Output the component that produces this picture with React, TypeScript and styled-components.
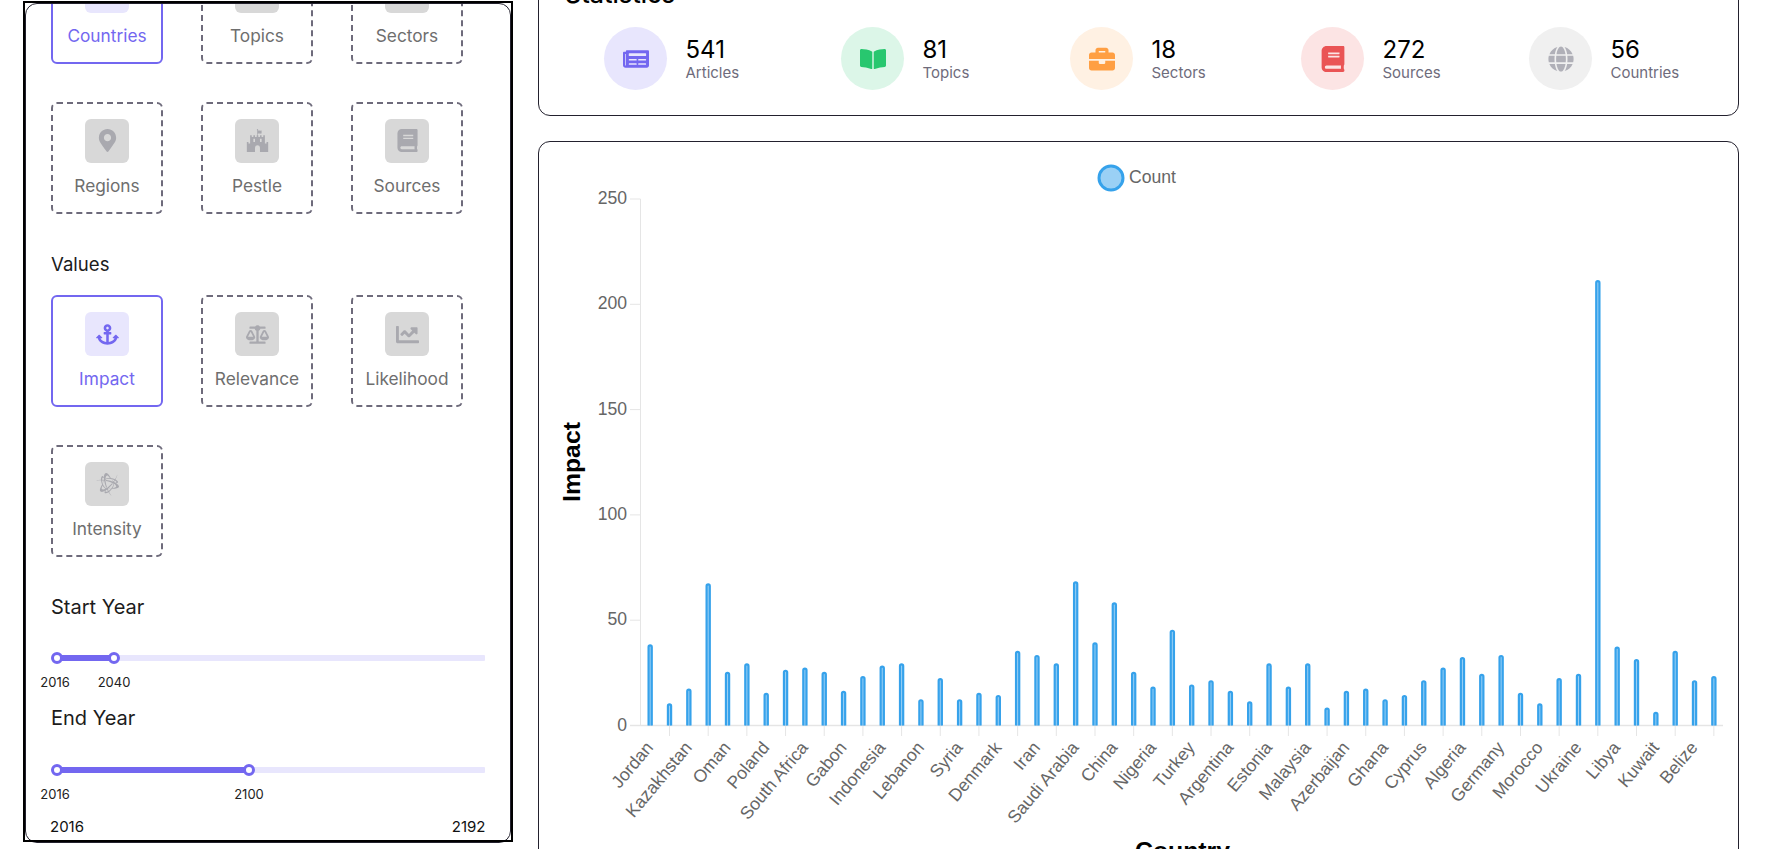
import { ReactNode } from "react";
import styled, { createGlobalStyle } from "styled-components";
import {
  FaAnchor,
  FaBalanceScale,
  FaBattleNet,
  FaBook,
  FaBookOpen,
  FaBriefcase,
  FaChartLine,
  FaFortAwesome,
  FaGlobe,
  FaMapMarkerAlt,
  FaNewspaper,
} from "react-icons/fa";

const PRIMARY = "#7367f0";
const AXIS = "#e5e5e5";
const TICK_TEXT = "#666";
const BAR = "#36a2eb";

const GlobalStyle = createGlobalStyle`
  html, body {
    margin: 0;
    height: 100%;
    overflow: hidden;
    background: #fff;
    font-family: Inter, "Liberation Sans", sans-serif;
  }
`;

const Page = styled.div`
  display: flex;
  align-items: flex-start;
  height: 849px;
  overflow: hidden;
`;

const Sidebar = styled.aside`
  flex: none;
  width: 486px;
  height: 836.5px;
  margin: 3px 0 0 25px;
  outline: 2px solid #000;
`;

const Panel = styled.div`
  box-sizing: border-box;
  height: 840px;
  padding: 0 25px;
  border: 1px solid #23212e;
  border-radius: 12px;
  overflow: hidden;
`;

const OptionGrid = styled.div<{ $first?: boolean }>`
  display: grid;
  grid-template-columns: repeat(3, 112px);
  column-gap: 38px;
  row-gap: 38px;
  margin-top: ${(p) => (p.$first ? "-52.5px" : "0")};
`;

const OptionCard = styled.div<{ $active?: boolean }>`
  box-sizing: border-box;
  height: 112px;
  display: flex;
  flex-direction: column;
  align-items: center;
  padding-top: 15px;
  border: 2px ${(p) => (p.$active ? `solid ${PRIMARY}` : "dashed #6e6b7b")};
  border-radius: 6px;
  color: ${(p) => (p.$active ? PRIMARY : "#6e6e6e")};
  font-size: 17.3px;
  line-height: 22px;
`;

const OptionIcon = styled.div<{ $active?: boolean }>`
  width: 44px;
  height: 44px;
  display: flex;
  align-items: center;
  justify-content: center;
  margin-bottom: 12px;
  border-radius: 6px;
  background: ${(p) => (p.$active ? "#e8e6fd" : "#d8d8d8")};
  color: ${(p) => (p.$active ? PRIMARY : "#a9a9af")};
  font-size: 23px;
`;

const SectionLabel = styled.div<{ $top: number; $bottom: number; $size?: number }>`
  margin: ${(p) => p.$top}px 0 ${(p) => p.$bottom}px;
  font-size: ${(p) => p.$size ?? 20}px;
  line-height: 26px;
  color: #1c1c1c;
`;

const SliderBlock = styled.div`
  position: relative;
  height: 6px;
  margin-left: 6px;
  width: 428px;
  border-radius: 1px;
  background: #e8e6fd;
`;

const SliderFill = styled.div`
  height: 100%;
  background: ${PRIMARY};
`;

const SliderThumb = styled.div`
  position: absolute;
  top: 50%;
  box-sizing: border-box;
  width: 12px;
  height: 12px;
  margin: -6px 0 0 -6px;
  border: 3px solid ${PRIMARY};
  border-radius: 50%;
  background: #fff;
`;

const SliderValue = styled.span`
  position: absolute;
  top: 18.5px;
  transform: translateX(-50%);
  font-size: 13px;
  line-height: 16px;
  color: #222;
`;

const RangeEnds = styled.div`
  display: flex;
  justify-content: space-between;
  width: 435.5px;
  margin: 43.5px 0 0 -1px;
  font-size: 15px;
  line-height: 20px;
  color: #111;
`;

const Main = styled.main`
  flex: none;
  width: 1201px;
  margin-left: 27px;
`;

const Card = styled.section`
  box-sizing: border-box;
  border: 1px solid #23212e;
  border-radius: 12px;
`;

const StatsCard = styled(Card)`
  margin-top: -60px;
  height: 176px;
  padding: 40px 0 0 26px;
`;

const StatsTitle = styled.h2`
  margin: 0 0 20px;
  font-size: 25px;
  line-height: 26px;
  font-weight: 500;
  color: #000;
`;

const StatsRow = styled.div`
  display: grid;
  grid-template-columns: 237px 229px 231px 228px 1fr;
  margin-left: 39px;
`;

const Stat = styled.div`
  display: flex;
  align-items: center;
  gap: 18.5px;
`;

const StatCircle = styled.div<{ $bg: string; $fg: string }>`
  flex: none;
  width: 63px;
  height: 63px;
  display: flex;
  align-items: center;
  justify-content: center;
  border-radius: 50%;
  background: ${(p) => p.$bg};
  color: ${(p) => p.$fg};
  font-size: 26px;
`;

const StatNumber = styled.div`
  font-size: 24px;
  line-height: 28px;
  color: #000;
`;

const StatLabel = styled.div`
  font-size: 15px;
  line-height: 18px;
  color: #6e6b7b;
`;

const ChartCard = styled(Card)`
  margin-top: 25px;
  height: 740px;
  overflow: hidden;
`;

const ChartSvg = styled.svg`
  display: block;
  font-family: "Liberation Sans", Arial, sans-serif;
`;

const locationOptions = [
  { label: "Regions", icon: <FaMapMarkerAlt /> },
  { label: "Pestle", icon: <FaFortAwesome /> },
  { label: "Sources", icon: <FaBook /> },
];

const valueOptions = [
  { label: "Impact", icon: <FaAnchor />, active: true },
  { label: "Relevance", icon: <FaBalanceScale /> },
  { label: "Likelihood", icon: <FaChartLine /> },
  { label: "Intensity", icon: <FaBattleNet /> },
];

const stats = [
  { value: 541, label: "Articles", bg: "#e8e6fd", fg: PRIMARY, icon: <FaNewspaper /> },
  { value: 81, label: "Topics", bg: "#dcf6e8", fg: "#28c76f", icon: <FaBookOpen /> },
  { value: 18, label: "Sectors", bg: "#fff1e3", fg: "#ff9f43", icon: <FaBriefcase /> },
  { value: 272, label: "Sources", bg: "#fce4e4", fg: "#ea5455", icon: <FaBook /> },
  { value: 56, label: "Countries", bg: "#f0f0f0", fg: "#b0b0b8", icon: <FaGlobe /> },
];

const impact = [
  38, 10, 17, 67, 25, 29, 15, 26, 27, 25, 16, 23, 28, 29, 12, 22, 12, 15, 14, 35, 33, 29, 68, 39,
  58, 25, 18, 45, 19, 21, 16, 11, 29, 18, 29, 8, 16, 17, 12, 14, 21, 27, 32, 24, 33, 15, 10, 22,
  24, 211, 37, 31, 6, 35, 21, 23,
];

const countryLabels = [
  "Jordan", "Kazakhstan", "Oman", "Poland", "South Africa", "Gabon", "Indonesia", "Lebanon",
  "Syria", "Denmark", "Iran", "Saudi Arabia", "China", "Nigeria", "Turkey", "Argentina", "Estonia",
  "Malaysia", "Azerbaijan", "Ghana", "Cyprus", "Algeria", "Germany", "Morocco", "Ukraine", "Libya",
  "Kuwait", "Belize",
];

const AXIS_X = 640.5;
const AXIS_Y = 725.5;
const STEP = 19.34;
const PX_PER_UNIT = 526.5 / 250;
const barX = (i: number) => AXIS_X + STEP * (i + 0.5);

const Option = ({ label, icon, active }: { label: string; icon: ReactNode; active?: boolean }) => (
  <OptionCard $active={active}>
    <OptionIcon $active={active}>{icon}</OptionIcon>
    {label}
  </OptionCard>
);

const YearSlider = ({ to, high }: { to: number; high: number }) => (
  <SliderBlock>
    <SliderFill style={{ width: to }} />
    <SliderThumb style={{ left: 0 }} />
    <SliderThumb style={{ left: to }} />
    <SliderValue style={{ left: -2 }}>2016</SliderValue>
    <SliderValue style={{ left: to }}>{high}</SliderValue>
  </SliderBlock>
);

const ImpactChart = () => (
  <ChartSvg width={1199} height={738} viewBox="539 142 1199 738">
    <circle cx={1111} cy={178} r={12} fill="rgba(54,162,235,0.5)" stroke={BAR} strokeWidth={3} />
    <text x={1129} y={183} fontSize={17.6} fill={TICK_TEXT}>
      Count
    </text>

    <line x1={AXIS_X} y1={199} x2={AXIS_X} y2={AXIS_Y} stroke={AXIS} />
    <line x1={630} y1={AXIS_Y} x2={1723} y2={AXIS_Y} stroke={AXIS} strokeWidth={1.5} />
    {[0, 50, 100, 150, 200, 250].map((v) => {
      const y = AXIS_Y - v * PX_PER_UNIT;
      return (
        <g key={v}>
          <line x1={630} y1={y} x2={AXIS_X} y2={y} stroke={AXIS} />
          <text x={627} y={y + 5} fontSize={17.6} fill={TICK_TEXT} textAnchor="end">
            {v}
          </text>
        </g>
      );
    })}

    {impact.map((v, i) =>
      i % 2 === 1 ? (
        <line key={i} x1={barX(i)} y1={AXIS_Y} x2={barX(i)} y2={736} stroke={AXIS} />
      ) : null
    )}

    {impact.map((v, i) => {
      const x = barX(i);
      const top = AXIS_Y - v * PX_PER_UNIT;
      return (
        <path
          key={i}
          d={`M${x - 1.6} ${AXIS_Y}V${top + 1.6}Q${x - 1.6} ${top} ${x} ${top}Q${x + 1.6} ${top} ${x + 1.6} ${top + 1.6}V${AXIS_Y}`}
          fill="rgba(54,162,235,0.5)"
          stroke={BAR}
          strokeWidth={2.2}
        />
      );
    })}

    {countryLabels.map((name, i) => {
      const x = barX(i * 2) + 4;
      const y = 748;
      return (
        <text
          key={name}
          x={x}
          y={y}
          fontSize={17.6}
          fill={TICK_TEXT}
          textAnchor="end"
          transform={`rotate(-50 ${x} ${y})`}
        >
          {name}
        </text>
      );
    })}

    <text
      x={580}
      y={462}
      fontSize={24.8}
      fontWeight={700}
      fill="#000"
      textAnchor="middle"
      transform="rotate(-90 580 462)"
    >
      Impact
    </text>
    <text x={1182.5} y={859} fontSize={24.8} fontWeight={700} fill="#000" textAnchor="middle">
      Country
    </text>
  </ChartSvg>
);

export default function App() {
  return (
    <>
      <GlobalStyle />
      <Page>
        <Sidebar>
          <Panel>
            <OptionGrid $first>
              <Option label="Countries" icon={<FaGlobe />} active />
              <Option label="Topics" icon={<FaBookOpen />} />
              <Option label="Sectors" icon={<FaBriefcase />} />
              {locationOptions.map((o) => (
                <Option key={o.label} label={o.label} icon={o.icon} />
              ))}
            </OptionGrid>
            <SectionLabel $top={37} $bottom={18.5} $size={18.6}>
              Values
            </SectionLabel>
            <OptionGrid>
              {valueOptions.map((o) => (
                <Option key={o.label} label={o.label} icon={o.icon} active={o.active} />
              ))}
            </OptionGrid>
            <SectionLabel $top={37} $bottom={35}>
              Start Year
            </SectionLabel>
            <YearSlider to={57} high={2040} />
            <SectionLabel $top={44} $bottom={36}>
              End Year
            </SectionLabel>
            <YearSlider to={192} high={2100} />
            <RangeEnds>
              <span>2016</span>
              <span>2192</span>
            </RangeEnds>
          </Panel>
        </Sidebar>
        <Main>
          <StatsCard>
            <StatsTitle>Statistics</StatsTitle>
            <StatsRow>
              {stats.map((s) => (
                <Stat key={s.label}>
                  <StatCircle $bg={s.bg} $fg={s.fg}>
                    {s.icon}
                  </StatCircle>
                  <div>
                    <StatNumber>{s.value}</StatNumber>
                    <StatLabel>{s.label}</StatLabel>
                  </div>
                </Stat>
              ))}
            </StatsRow>
          </StatsCard>
          <ChartCard>
            <ImpactChart />
          </ChartCard>
        </Main>
      </Page>
    </>
  );
}
